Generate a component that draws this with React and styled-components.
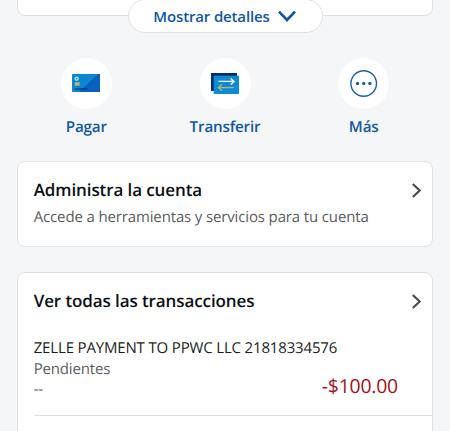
import React from 'react';
import styled, { createGlobalStyle } from 'styled-components';

const CardIcon = () => (
  <svg width="28" height="19" viewBox="0 0 28 19">
    <rect width="28" height="18" rx="0.8" fill="#0c86d2" />
    <path d="M27.2 0H28V17.2a.8.8 0 0 1-.8.8H7L26 0Z" fill="#0960bd" />
    <circle cx="4.6" cy="4.7" r="1.5" fill="none" stroke="#c9efff" strokeWidth="1.2" />
    <rect x="2.8" y="8.3" width="4.8" height="3.4" fill="#c5b462" />
    <path d="M2.8 15H15.4" stroke="#0a4285" strokeWidth="1.5" />
  </svg>
);

const TransferIcon = () => (
  <svg width="28" height="21" viewBox="0 0 28 21">
    <rect width="26" height="18" fill="#0b2b69" />
    <rect x="2.7" y="2.7" width="25.3" height="18.3" fill="#0c8bd6" />
    <path d="M7.5 8.4H23M19.8 5.4L23 8.4L19.8 11.4" fill="none" stroke="#fff" strokeWidth="1.4" />
    <path d="M23 14.6H7.5M10.7 11.6L7.5 14.6L10.7 17.6" fill="none" stroke="#c5b462" strokeWidth="1.4" />
  </svg>
);

const MoreIcon = () => (
  <svg width="28" height="28" viewBox="0 0 28 28">
    <circle cx="13.7" cy="13.5" r="12.8" fill="none" stroke="#1b60a5" strokeWidth="1.4" />
    <circle cx="7.5" cy="13.5" r="1.7" fill="#1b60a5" />
    <circle cx="13.7" cy="13.5" r="1.7" fill="#1b60a5" />
    <circle cx="19.9" cy="13.5" r="1.7" fill="#1b60a5" />
  </svg>
);

const ChevronDown = () => (
  <svg width="18" height="12" viewBox="0 0 18 12">
    <path d="M0.9 1.6L9 10L17.1 1.6" fill="none" stroke="#0f58a3" strokeWidth="2.7" />
  </svg>
);

const ChevronRight = () => (
  <svg width="10" height="15" viewBox="0 0 10 15">
    <path d="M1.8 1L8.7 7.5L1.8 14" fill="none" stroke="#4b4d4f" strokeWidth="2.2" />
  </svg>
);

const actions = [
  { label: 'Pagar', icon: <CardIcon /> },
  { label: 'Transferir', icon: <TransferIcon /> },
  { label: 'Más', icon: <MoreIcon /> },
];

const App = () => {
  return (
    <Page>
      <GlobalStyle />
      <Summary>
        <DetailsButton>
          <Text $size={15} $weight={600} $spacing={-0.15} $color="#0f58a3">
            Mostrar detalles
          </Text>
          <ChevronDown />
        </DetailsButton>
      </Summary>
      <Actions>
        {actions.map(({ label, icon }) => (
          <Action key={label}>
            <ActionCircle>{icon}</ActionCircle>
            <Text $size={15.2} $weight={600} $spacing={-0.18} $color="#0f58a3">
              {label}
            </Text>
          </Action>
        ))}
      </Actions>
      <ManageCard>
        <CardHeader>
          <Text as="h2" $size={17} $weight={600} $spacing={-0.1} $color="#0b0f14">
            Administra la cuenta
          </Text>
          <ChevronRight />
        </CardHeader>
        <Text as="p" $size={15} $spacing={-0.14} $color="#5a5c5e">
          Accede a herramientas y servicios para tu cuenta
        </Text>
      </ManageCard>
      <TransactionsCard>
        <CardHeader>
          <Text as="h2" $size={17} $weight={600} $spacing={-0.1} $color="#0b0f14">
            Ver todas las transacciones
          </Text>
          <ChevronRight />
        </CardHeader>
        <Transaction>
          <Text as="p" $size={15} $spacing={-0.16} $color="#1b1d20">
            ZELLE PAYMENT TO PPWC LLC 21818334576
          </Text>
          <Status as="p" $size={15} $spacing={-0.16} $color="#5a5c5e">
            Pendientes
          </Status>
          <TransactionRow>
            <Text $size={15} $spacing={-0.3} $color="#5a5c5e">
              --
            </Text>
            <Amount $size={19.4} $spacing={-0.2} $color="#a31219">
              -$100.00
            </Amount>
          </TransactionRow>
        </Transaction>
      </TransactionsCard>
    </Page>
  );
};

const GlobalStyle = createGlobalStyle`
  * {
    box-sizing: border-box;
    margin: 0;
    padding: 0;
  }

  body {
    background-color: #f5f6f8;
    font-family: 'Open Sans', 'Noto Sans', sans-serif;
    text-rendering: geometricPrecision;
    overflow: hidden;
  }

  svg {
    display: block;
    flex-shrink: 0;
  }
`;

const Text = styled.span`
  font-size: ${({ $size }) => $size}px;
  font-weight: ${({ $weight }) => $weight || 400};
  color: ${({ $color }) => $color};
  letter-spacing: ${({ $spacing }) => $spacing || 0}px;
  line-height: 20px;
  white-space: nowrap;
`;

const Page = styled.main`
  width: 450px;
  height: 431px;
  padding: 0 17px;
  display: flex;
  flex-direction: column;
  overflow: hidden;
`;

const Panel = styled.section`
  flex-shrink: 0;
  background-color: #fff;
  border: 1px solid #dfe1e3;
  border-radius: 8px;
`;

const Summary = styled(Panel)`
  position: relative;
  height: 16px;
  border-top: 0;
  border-radius: 0 0 8px 8px;
`;

// sits over the bottom edge of the summary panel
const DetailsButton = styled.button`
  position: absolute;
  top: -1px;
  left: 110px;
  width: 195px;
  height: 34px;
  padding-right: 2px;
  display: flex;
  align-items: center;
  justify-content: center;
  gap: 8px;
  background-color: #fff;
  border: 1px solid #dfe1e3;
  border-radius: 17px;
  font-family: inherit;
`;

const Actions = styled.nav`
  flex-shrink: 0;
  margin-top: 42px;
  height: 103px;
  display: flex;
  justify-content: center;
`;

const Action = styled.div`
  width: 139px;
  display: flex;
  flex-direction: column;
  align-items: center;
  gap: 8px;
`;

const ActionCircle = styled.div`
  width: 51px;
  height: 51px;
  display: flex;
  align-items: center;
  justify-content: center;
  background-color: #fff;
  border-radius: 50%;
`;

const ManageCard = styled(Panel)`
  height: 86px;
  padding: 18px 11px 0 15.7px;
`;

const CardHeader = styled.div`
  display: flex;
  align-items: center;
  justify-content: space-between;
  margin-bottom: 7px;
`;

const TransactionsCard = styled(Panel)`
  margin-top: 25px;
  height: 190px;
  padding: 18px 0 0 15.7px;

  ${CardHeader} {
    padding-right: 11px;
    margin-bottom: 27px;
  }
`;

const Transaction = styled.div`
  height: 78px;
  border-bottom: 1px solid #dfe1e3;
`;

const Status = styled(Text)`
  margin-top: 1px;
`;

const TransactionRow = styled.div`
  display: flex;
  justify-content: space-between;
  padding-right: 34px;
`;

const Amount = styled(Text)`
  margin-top: -3px;
`;

export default App;
